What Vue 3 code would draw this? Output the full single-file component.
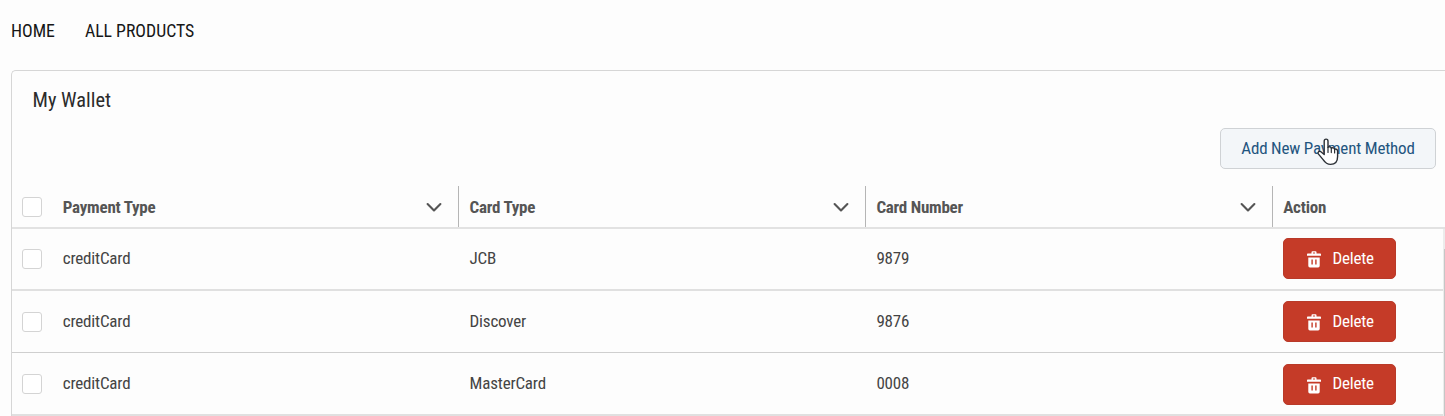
<script setup>
const columns = ['Payment Type', 'Card Type', 'Card Number']
const rows = [
  { type: 'creditCard', card: 'JCB', number: '9879' },
  { type: 'creditCard', card: 'Discover', number: '9876' },
  { type: 'creditCard', card: 'MasterCard', number: '0008' },
]
</script>

<template>
  <div class="page">
    <nav class="nav">
      <a class="home">HOME</a>
      <a class="products">ALL PRODUCTS</a>
    </nav>
    <section class="card">
      <h1>My Wallet</h1>
      <div class="toolbar">
        <button class="add">
          <span>Add New Payment Method</span>
          <svg class="cursor" width="24" height="29" viewBox="0 0 24 29">
            <path d="M8.2 17.5V4.2C8.2 1.4 12 1.4 12 4.2V10.4C12.7 9.4 15 9.7 15.3 11.2C16.4 10.3 18.3 10.8 18.6 12.3C20 11.6 21.6 12.5 21.6 14.2V19.5C21.6 24.7 18.7 27.4 14.6 27.4C10.7 27.4 9.1 25.7 7.3 22.9L2.3 16.9C1.3 15.2 3.2 13.6 4.9 14.8Z" fill="#fff" stroke="#2b3036" stroke-width="1.4" stroke-linejoin="round" />
            <path d="M12 10.4V15.4M15.3 11.2V15.6M18.6 12.3V16" fill="none" stroke="#2b3036" stroke-width="1.2" stroke-linecap="round" />
          </svg>
        </button>
      </div>
      <div class="table">
        <div class="row head">
          <div class="check"><i class="box"></i></div>
          <div v-for="c in columns" :key="c" class="cell">
            <span>{{ c }}</span>
            <svg class="chevron" width="16" height="10" viewBox="0 0 16 10">
              <path d="M1.6 2.1L8 8.5L14.4 2.1" fill="none" stroke="#555" stroke-width="2.1" stroke-linecap="round" stroke-linejoin="round" />
            </svg>
          </div>
          <div class="action"><span>Action</span></div>
        </div>
        <div class="body">
          <div class="items">
            <div v-for="r in rows" :key="r.number" class="row item">
              <div class="check"><i class="box"></i></div>
              <div class="cell"><span>{{ r.type }}</span></div>
              <div class="cell"><span>{{ r.card }}</span></div>
              <div class="cell"><span>{{ r.number }}</span></div>
              <div class="action">
                <button class="delete">
                  <svg width="14" height="17" viewBox="0 0 14 17">
                    <path d="M4.5 2.5V1.3Q4.5.3 5.5.3H8.5Q9.5.3 9.5 1.3V2.5H13.3Q14 2.5 14 3.2V4.7H0V3.2Q0 2.5.7 2.5ZM5.9 2.5H8.1V1.6H5.9ZM1.3 6.5H12.7V14.8Q12.7 16.4 11.1 16.4H2.9Q1.3 16.4 1.3 14.8ZM4.4 8.5V13.6H5.8V8.5ZM8.2 8.5V13.6H9.6V8.5Z" fill="#fff" fill-rule="evenodd" />
                  </svg>
                  <span>Delete</span>
                </button>
              </div>
            </div>
          </div>
          <div class="scrollbar"><div class="thumb"></div></div>
        </div>
      </div>
    </section>
  </div>
</template>

<style>
body { background: #fdfdfd; overflow: hidden; }
</style>

<style scoped>
.page {
  width: 1445px; height: 416px; overflow: hidden; box-sizing: border-box;
  padding-left: 11px;
  font-family: "Roboto Condensed", Roboto, sans-serif; font-stretch: 75%;
  font-size: 17px; line-height: 24px; color: #444; white-space: nowrap;
}
.nav { display: flex; gap: 30px; height: 70px; padding-top: 19px; box-sizing: border-box; font-size: 17.75px; color: #161616; }
.card { height: 360px; box-sizing: border-box; border: 1px solid #d6d6d6; border-right: 0; border-radius: 5px 0 0 0; }
h1 { margin: 0; padding: 15px 0 0 20.5px; font-size: 20.4px; line-height: 28px; height: 42px; font-weight: 400; color: #2b2b2b; }
.toolbar { display: flex; justify-content: flex-end; padding-right: 9px; letter-spacing: -.18px; }
button { font: inherit; letter-spacing: inherit; box-sizing: border-box; height: 41px; display: flex; align-items: center; justify-content: center; padding: 0; }
button span, .item .cell span { padding-bottom: 2px; }
.add { position: relative; width: 216px; border: 1px solid #cfd2d5; border-radius: 5px; background: #f3f6f9; color: #1f5580; }
.cursor { position: absolute; left: 95px; top: 8px; }
.table { margin-top: 17px; letter-spacing: -.18px; }
.row { display: grid; grid-template-columns: 40.6px 406.8px 406.8px 406.8px 1fr; }
.head { height: 43px; box-sizing: border-box; border-bottom: 2px solid #e2e2e2; font-weight: 700; letter-spacing: -.23px; color: #555; }
.head span { padding-top: 1px; }
.check { display: flex; align-items: center; padding-left: 10px; }
.box { width: 20px; height: 20px; box-sizing: border-box; border: 1px solid #d4d4d4; border-radius: 3px; background: #fff; }
.cell { display: flex; align-items: center; justify-content: space-between; padding-left: 10.2px; }
.head .cell { border-right: 1px solid #b5b5b5; padding-right: 16px; }
.action { display: flex; align-items: center; padding-left: 10.2px; }
.body { display: grid; grid-template-columns: 1fr 2px; }
.item { height: 62px; box-sizing: border-box; border-bottom: 2px solid #e0e0e0; }
.item:nth-child(1) { padding-bottom: 1px; }
.item:nth-child(2) { border-bottom: 1px solid #cfcfcf; }
.item:nth-child(3) { height: 63px; padding-top: 1px; }
.delete { width: 113px; padding-left: 2px; border: 1px solid #b93a29; border-radius: 5px; background: #c53b28; color: #fff; gap: 11px; }
.delete svg { margin-top: 2px; }
.scrollbar { background: #ececec; padding-top: 20px; }
.thumb { height: 100%; background: #c6c6c6; margin-left: 1px; }
</style>
